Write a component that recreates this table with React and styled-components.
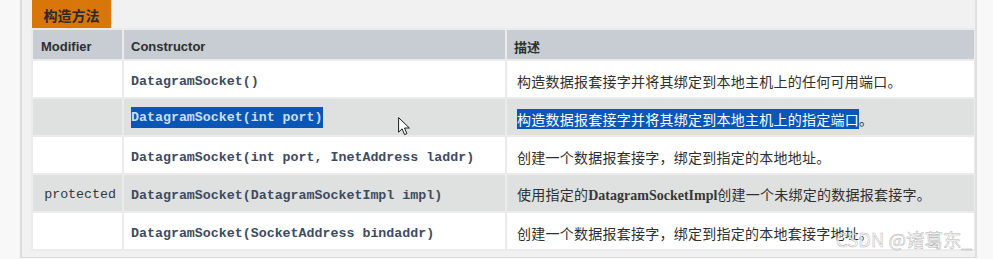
import React from 'react';
import styled, { createGlobalStyle } from 'styled-components';

const GlobalStyle = createGlobalStyle`
  html, body {
    margin: 0;
    padding: 0;
    background: #f8f8f8;
  }
`;

const rows = [
  {
    modifier: '',
    ctor: 'DatagramSocket()',
    desc: ['构造数据报套接字并将其绑定到本地主机上的任何可用端口。'],
  },
  {
    modifier: '',
    ctor: 'DatagramSocket(int port)',
    selected: true,
    desc: ['构造数据报套接字并将其绑定到本地主机上的指定端口', '。'],
  },
  {
    modifier: '',
    ctor: 'DatagramSocket(int port, InetAddress laddr)',
    desc: ['创建一个数据报套接字，绑定到指定的本地地址。'],
  },
  {
    modifier: 'protected',
    ctor: 'DatagramSocket(DatagramSocketImpl impl)',
    desc: ['使用指定的', 'DatagramSocketImpl', '创建一个未绑定的数据报套接字。'],
  },
  {
    modifier: '',
    ctor: 'DatagramSocket(SocketAddress bindaddr)',
    desc: ['创建一个数据报套接字，绑定到指定的本地套接字地址。'],
  },
];

const App = () => {
  return (
    <Page>
      <GlobalStyle />
      <Panel>
        <Tab>构造方法</Tab>
        <Grid>
          <HeadCell $pad={8}>Modifier</HeadCell>
          <HeadCell>Constructor</HeadCell>
          <HeadCell $cjk>描述</HeadCell>
          {rows.map((row, i) => {
            const shade = i % 2 === 1;
            return (
              <React.Fragment key={row.ctor}>
                <Cell $shade={shade} $right>
                  {row.modifier && <Modifier>{row.modifier}</Modifier>}
                </Cell>
                <Cell $shade={shade}>
                  <Code $selected={row.selected}>{row.ctor}</Code>
                </Cell>
                <Cell $shade={shade} $pad={10}>
                  <Desc>
                    {row.selected ? (
                      <>
                        <Selected>{row.desc[0]}</Selected>
                        {row.desc[1]}
                      </>
                    ) : row.desc.length === 3 ? (
                      <>
                        {row.desc[0]}
                        <SerifName>{row.desc[1]}</SerifName>
                        {row.desc[2]}
                      </>
                    ) : (
                      row.desc[0]
                    )}
                  </Desc>
                </Cell>
              </React.Fragment>
            );
          })}
        </Grid>
        <Cursor width="13" height="19" viewBox="0 0 13 19">
          <path
            d="M0.6 0.6 L0.6 15.2 L4.1 11.8 L6.6 17.6 L8.9 16.6 L6.5 11 L11.4 11 Z"
            fill="#ffffff"
            stroke="#1a1a1a"
            strokeWidth="1"
            strokeLinejoin="miter"
          />
        </Cursor>
        <Watermark>CSDN @诸葛东_</Watermark>
      </Panel>
    </Page>
  );
};

const Page = styled.div`
  padding-left: 20px;
  width: 993px;
  height: 259px;
  box-sizing: border-box;
  overflow: hidden;
`;

const Panel = styled.div`
  position: relative;
  width: 957px;
  box-sizing: border-box;
  background: #f1f1f1;
  border-left: 2px solid #dcdcdc;
  border-right: 2px solid #e0e0e0;
  border-bottom: 1px solid #dddddd;
  padding: 0 0 6px 9px;
`;

const Tab = styled.div`
  margin-left: 1px;
  width: 80px;
  height: 28px;
  box-sizing: border-box;
  background: #d9760a;
  border-right: 1px solid #f3d9a6;
  color: #2a2a2a;
  font-family: 'Noto Sans CJK SC', sans-serif;
  font-size: 14px;
  font-weight: 700;
  display: flex;
  align-items: center;
  justify-content: center;
  padding-top: 1px;
`;

const Grid = styled.div`
  display: grid;
  grid-template-columns: 89px 381px 467px;
  grid-template-rows: 29px repeat(5, 36px);
  gap: 2px;
  padding: 2px 1px 2px 2px;
  width: 944px;
  box-sizing: border-box;
  background: #ebebeb;
`;

const HeadCell = styled.div`
  background: #c7cdd3;
  display: flex;
  align-items: center;
  padding-left: ${(p) => p.$pad || 7}px;
  padding-top: 3px;
  color: #2d2f2e;
  font-family: ${(p) =>
    p.$cjk ? "'Noto Sans CJK SC', sans-serif" : "'Liberation Sans', Arial, sans-serif"};
  font-size: 13px;
  font-weight: 700;
`;

const Cell = styled.div`
  background: ${(p) => (p.$shade ? '#dfe0e0' : '#ffffff')};
  display: flex;
  align-items: center;
  justify-content: ${(p) => (p.$right ? 'flex-end' : 'flex-start')};
  padding: ${(p) => (p.$right ? '0 6px 0 0' : `0 0 0 ${p.$pad || 7}px`)};
  padding-top: 1px;
`;

const Modifier = styled.span`
  font-family: 'Liberation Mono', 'DejaVu Sans Mono', monospace;
  font-size: 13.3px;
  color: #353833;
  margin-top: 2px;
`;

const Code = styled.span`
  font-family: 'Liberation Mono', 'DejaVu Sans Mono', monospace;
  font-size: 13.3px;
  font-weight: 700;
  line-height: 21px;
  color: ${(p) => (p.$selected ? '#c9def4' : '#3d4b5f')};
  background: ${(p) => (p.$selected ? '#0a56b6' : 'transparent')};
  margin-top: ${(p) => (p.$selected ? '0' : '4px')};
`;

const Desc = styled.span`
  font-family: 'Noto Sans CJK SC', sans-serif;
  font-size: 14px;
  letter-spacing: 0.25px;
  line-height: 16px;
  color: #2f302e;
  margin-top: 3px;
`;

const Selected = styled.span`
  background: #0a56b6;
  color: #ffffff;
`;

const SerifName = styled.span`
  font-family: 'Liberation Serif', serif;
  font-weight: 700;
  letter-spacing: 0;
  color: #353833;
`;

const Cursor = styled.svg`
  position: absolute;
  left: 376px;
  top: 117px;
`;

const Watermark = styled.div`
  position: absolute;
  left: 814px;
  top: 226px;
  font-family: 'Noto Sans CJK SC', sans-serif;
  font-size: 18.5px;
  color: rgba(255, 255, 255, 0.88);
  -webkit-text-stroke: 0.5px rgba(140, 140, 140, 0.7);
  white-space: nowrap;
  pointer-events: none;
`;

export default App;
